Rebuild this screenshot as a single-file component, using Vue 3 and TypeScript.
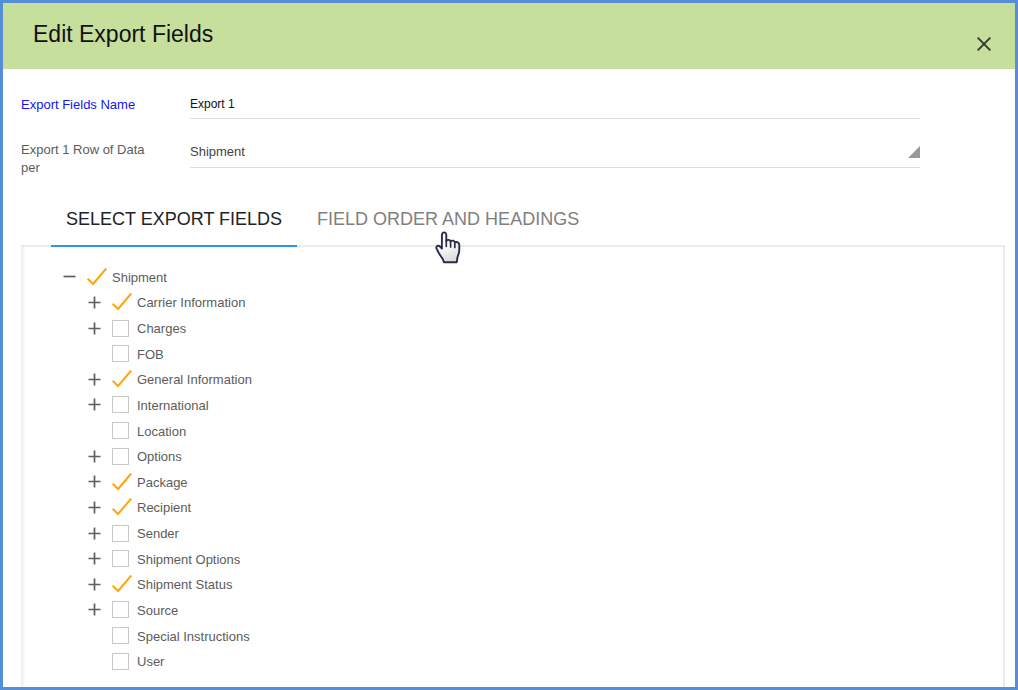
<script setup lang="ts">
import { ref } from 'vue'

interface Field {
  id: string
  label: string
  checked: boolean
  expandable: boolean
  root?: boolean
}

const exportName = ref('Export 1')
const rowPer = ref('Shipment')
const expanded = ref(true)

const make = (label: string, checked: boolean, expandable = true, root = false): Field => ({
  id: 'field-' + label.toLowerCase().replace(/ /g, '-'),
  label,
  checked,
  expandable,
  root,
})

const fields = ref<Field[]>([
  make('Shipment', true, true, true),
  make('Carrier Information', true),
  make('Charges', false),
  make('FOB', false, false),
  make('General Information', true),
  make('International', false),
  make('Location', false, false),
  make('Options', false),
  make('Package', true),
  make('Recipient', true),
  make('Sender', false),
  make('Shipment Options', false),
  make('Shipment Status', true),
  make('Source', false),
  make('Special Instructions', false, false),
  make('User', false, false),
])
</script>

<template>
  <main class="dialog">
    <header class="header">
      <h1 class="title">Edit Export Fields</h1>
      <button class="close" type="button" aria-label="Close">
        <svg width="14" height="14" viewBox="0 0 14 14" aria-hidden="true">
          <path d="M0.7 0.7 13.3 13.3M13.3 0.7 0.7 13.3" fill="none" stroke="#333" stroke-width="1.8" />
        </svg>
      </button>
    </header>

    <form class="form" @submit.prevent>
      <div class="form-row">
        <label class="label label-name" for="export-name">Export Fields Name</label>
        <input id="export-name" v-model="exportName" class="control name" type="text" />
      </div>
      <div class="form-row">
        <label class="label" for="row-per">Export 1 Row of Data per</label>
        <div class="select-wrap">
          <select id="row-per" v-model="rowPer" class="control select">
            <option>Shipment</option>
            <option>Package</option>
          </select>
          <svg class="corner" width="12" height="12" viewBox="0 0 12 12" aria-hidden="true">
            <path d="M12 0V12H0Z" fill="#999" />
          </svg>
        </div>
      </div>
    </form>

    <section class="fields">
      <div class="tabs" role="tablist">
        <button class="tab active" type="button" role="tab" aria-selected="true">SELECT EXPORT FIELDS</button>
        <button class="tab" type="button" role="tab" aria-selected="false">
          FIELD ORDER AND HEADINGS
          <svg class="pointer" width="26" height="33" viewBox="0 0 26 33" aria-hidden="true">
            <defs>
              <linearGradient id="hand-fill" x1="0" y1="0" x2="0.3" y2="1">
                <stop offset="0.5" stop-color="#fff" />
                <stop offset="1" stop-color="#ddd" />
              </linearGradient>
            </defs>
            <path
              d="M6.9 17.5V4C6.9 .5 11.3 .5 11.3 4V10C12.2 8.3 15 8.7 15.6 10.3C17 9 19.2 9.6 19.8 11.2C22 10.4 24.2 11.5 24.3 14V19C24.2 22 23.2 24.5 22.4 26.5L21.8 31.2H8.9L8 28.5C6.2 25.4 3.5 22.5 1.6 17.6C.6 14.8 3.6 14 5 15.5Z"
              fill="url(#hand-fill)"
              stroke="#292b45"
              stroke-width="1.9"
              stroke-linejoin="round"
            />
            <path d="M11.3 9V15.5M15.6 10.5V16M19.8 11.5V16.5" fill="none" stroke="#292b45" stroke-width="1.7" stroke-linecap="round" />
          </svg>
        </button>
      </div>

      <div class="panel" role="tabpanel">
        <ul class="tree">
          <li v-for="field in fields" :key="field.id" class="node" :class="{ root: field.root }">
            <button
              v-if="field.expandable"
              class="toggle"
              type="button"
              :aria-label="'Toggle ' + field.label"
              :aria-expanded="field.root ? expanded : false"
            >
              <svg width="13" height="13" viewBox="0 0 13 13" aria-hidden="true">
                <path :d="field.root ? 'M.5 6.5H12.5' : 'M.5 6.5H12.5M6.5 .5V12.5'" fill="none" stroke="#5e5e5e" stroke-width="1.7" />
              </svg>
            </button>
            <span v-else class="toggle"></span>
            <span class="check">
              <input :id="field.id" v-model="field.checked" class="box" type="checkbox" />
              <svg v-if="field.checked" class="tick" width="20" height="18" viewBox="0 0 20 18" aria-hidden="true">
                <path d="M.7 10.8 6.1 16 19.2 .5" fill="none" stroke="#ffa50a" stroke-width="2" />
              </svg>
            </span>
            <label class="field-label" :for="field.id">{{ field.label }}</label>
          </li>
        </ul>
      </div>
    </section>
  </main>
</template>

<style>
body {
  margin: 0;
}
</style>

<style scoped>
* {
  box-sizing: border-box;
}

.dialog {
  display: flex;
  flex-direction: column;
  min-height: 100vh;
  border: 3px solid #558ed5;
  background: #fff;
  color: #5c5c5c;
  font-family: "Liberation Sans", Arial, sans-serif;
  font-size: 13px;
}

button,
input,
select {
  margin: 0;
  padding: 0;
  border: 0;
  background: none;
  color: inherit;
  font-family: inherit;
}

.header {
  display: flex;
  justify-content: space-between;
  padding: 16px 24px 20px 30px;
  background: #c6df9c;
}

.title {
  margin: 0;
  color: #111;
  font-size: 23px;
  font-weight: 400;
  line-height: 30px;
}

.close {
  display: flex;
  align-self: flex-end;
  margin-bottom: -2px;
}

.form {
  display: grid;
  gap: 20px;
  padding: 20px 95px 12px 18px;
}

.form-row {
  display: grid;
  grid-template-columns: 140px 1fr;
  column-gap: 29px;
  align-items: start;
}

.label {
  padding-top: 2px;
  line-height: 18px;
}

.label-name {
  color: #1414f0;
  line-height: 28px;
}

.control {
  display: block;
  width: 100%;
  border-bottom: 1px solid #ddd;
  border-radius: 0;
  outline: 0;
}

.name {
  height: 30px;
  color: #111;
  font-size: 12px;
}

.select-wrap {
  position: relative;
}

.select {
  height: 29px;
  padding-bottom: 4px;
  appearance: none;
  color: #444;
  font-size: 13px;
}

.corner {
  position: absolute;
  right: 0;
  bottom: 10px;
  pointer-events: none;
}

.fields {
  display: flex;
  flex: 1;
  flex-direction: column;
  padding: 0 10px 0 18px;
}

.tabs {
  display: flex;
  gap: 5px;
  padding-left: 30px;
  box-shadow: inset 0 -2px #ebebeb;
}

.tab {
  position: relative;
  height: 58px;
  padding: 4px 15px 0;
  border-bottom: 2px solid transparent;
  color: #808080;
  font-size: 18px;
}

.active {
  border-bottom-color: #2b95e9;
  color: #222;
}

.pointer {
  position: absolute;
  top: 42px;
  left: 133px;
}

.panel {
  display: flex;
  flex: 1;
  padding: 17px 0 13px 36px;
  border-right: 2px solid #ebebeb;
  background: linear-gradient(to right, #ededed, #fff 5px);
}

.tree {
  display: grid;
  flex: 1;
  grid-auto-rows: 1fr;
  margin: 0;
  padding: 0;
  list-style: none;
}

.node {
  display: flex;
  align-items: center;
  padding-left: 25px;
}

.root {
  padding-left: 0;
}

.toggle {
  display: flex;
  flex: none;
  justify-content: center;
  width: 25px;
}

.check {
  display: grid;
  flex: none;
  align-items: center;
  width: 30px;
  padding-left: 5px;
}

.box {
  grid-area: 1 / 1;
  width: 17px;
  height: 17px;
  border: 1px solid #c8c8c8;
  appearance: none;
}

.box:checked {
  border-color: transparent;
}

.tick {
  grid-area: 1 / 1;
  pointer-events: none;
}

.field-label {
  padding-top: 2px;
  line-height: 18px;
}
</style>
